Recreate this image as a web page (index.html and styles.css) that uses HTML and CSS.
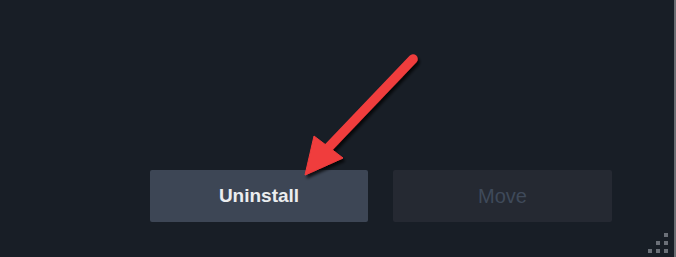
FILE: index.html
```html
<!DOCTYPE html>
<html>
<head>
<meta charset="utf-8">
<link rel="stylesheet" href="styles.css">
</head>
<body>
<div class="window">
  <div class="actions">
    <button class="btn btn-primary">Uninstall</button>
    <button class="btn btn-disabled" disabled>Move</button>
  </div>
  <svg class="arrow" width="676" height="257" viewBox="0 0 676 257">
    <defs>
      <filter id="sh" x="-20%" y="-20%" width="140%" height="140%">
        <feDropShadow dx="2" dy="3" stdDeviation="1.6" flood-color="#000" flood-opacity="0.75"/>
      </filter>
    </defs>
    <g filter="url(#sh)" fill="#f03d3d" stroke="#f03d3d">
      <line x1="413" y1="59" x2="328" y2="148" stroke-width="9.5" stroke-linecap="round"/>
      <polygon points="305,175 314,136 343,158" stroke-width="1" stroke-linejoin="round"/>
    </g>
  </svg>
  <div class="grip">
    <span></span><span></span><span></span><span></span><span></span><span></span>
  </div>
</div>
</body>
</html>
```
FILE: styles.css
```css
html, body {
  margin: 0;
  padding: 0;
  width: 676px;
  height: 257px;
  overflow: hidden;
  background: #181e26;
}
.window {
  position: relative;
  box-sizing: border-box;
  width: 676px;
  height: 257px;
  background: #181e26;
  border-right: 2px solid #6a6d72;
  padding: 170px 0 0 150px;
}
.actions {
  display: flex;
  gap: 25px;
}
.btn {
  width: 218px;
  height: 52px;
  border: none;
  border-radius: 2px;
  font-family: "Liberation Sans", Arial, sans-serif;
  font-size: 19px;
  padding: 0;
}
.btn-primary {
  background: #3d4655;
  color: #ebedef;
  font-weight: bold;
}
.btn-disabled {
  width: 219px;
  background: #252932;
  color: #3f4a5a;
  font-size: 20px;
}
.arrow {
  position: absolute;
  left: 0;
  top: 0;
  pointer-events: none;
}
.grip {
  position: absolute;
  right: 5px;
  bottom: 3px;
  width: 21px;
  height: 21px;
  display: grid;
  grid-template-columns: repeat(3, 4px);
  grid-template-rows: repeat(3, 4px);
  gap: 4px;
}
.grip span {
  background: #6b7078;
}
.grip span:nth-child(1) { grid-column: 3; grid-row: 1; }
.grip span:nth-child(2) { grid-column: 2; grid-row: 2; }
.grip span:nth-child(3) { grid-column: 3; grid-row: 2; }
.grip span:nth-child(4) { grid-column: 1; grid-row: 3; }
.grip span:nth-child(5) { grid-column: 2; grid-row: 3; }
.grip span:nth-child(6) { grid-column: 3; grid-row: 3; }
```
